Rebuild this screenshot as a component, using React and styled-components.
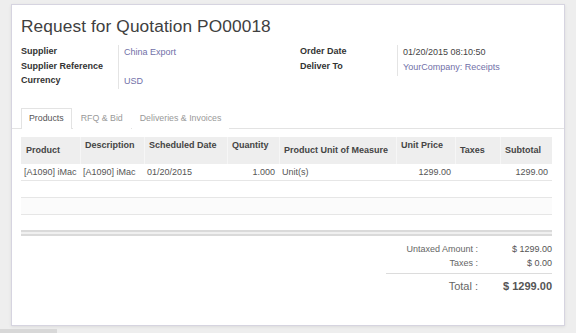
import React from 'react'
import styled, { createGlobalStyle } from 'styled-components'

const GlobalStyle = createGlobalStyle`
  html, body {
    margin: 0;
    padding: 0;
    background: #ececec;
    font-family: "Liberation Sans", Arial, sans-serif;
    color: #4c4c4c;
  }
`

const Page = styled.div`
  width: 576px;
  height: 333px;
  overflow: hidden;
  position: relative;
  box-sizing: border-box;
  padding: 4px 0 0 11px;
  background: #eeeeee;
`

const Sheet = styled.div`
  width: 554px;
  height: 322px;
  box-sizing: border-box;
  background: #ffffff;
  border: 1px solid #d6d4e0;
  box-shadow: 0 1px 3px rgba(0, 0, 0, 0.08);
  padding: 10px 13px 0 9px;
`

const Title = styled.h1`
  margin: 0;
  font-size: 17.3px;
  font-weight: normal;
  color: #404040;
  line-height: 22px;
  letter-spacing: 0.1px;
`

const FieldGroup = styled.div`
  display: flex;
  margin-top: 8px;
`

const FieldColumn = styled.div`
  display: grid;
  grid-template-columns: 97px 1fr;
  grid-template-rows: ${p => p.rows};
  width: ${p => p.width}px;
`

const Label = styled.div`
  font-size: 9px;
  font-weight: bold;
  color: #333;
  line-height: 13px;
`

const Value = styled.div`
  font-size: 9px;
  line-height: 15px;
  padding-left: 5px;
  border-left: 1px solid #e4e4e4;
  color: ${p => (p.link ? '#7170a8' : '#444')};
`

const Tabs = styled.div`
  display: flex;
  margin: 19px -13px 0 -9px;
  padding-left: 9px;
  border-bottom: 1px solid #e3e3e3;
  height: 20px;
`

const Tab = styled.div`
  font-size: 8.8px;
  line-height: 19px;
  padding: 0 7px;
  margin-right: 1px;
  color: ${p => (p.active ? '#555' : '#999')};
  background: #fff;
  border: 1px solid ${p => (p.active ? '#e3e3e3' : 'transparent')};
  border-bottom: none;
  box-sizing: border-box;
  margin-bottom: -1px;
  height: 21px;
`

const Table = styled.div`
  margin-top: 8px;
  width: 531px;
`

const cols = '59px 64px 83px 52px 117px 59px 45px 52px'

const HeaderRow = styled.div`
  display: grid;
  grid-template-columns: ${cols};
  height: 27px;
  background: #eeeeee;
`

const HeadCell = styled.div`
  font-size: 9px;
  font-weight: bold;
  color: #444;
  padding: ${p => (p.top ? '3px' : '8px')} 4px 0 4px;
  line-height: 11px;
  border-left: 1px solid ${p => (p.first ? 'transparent' : '#f6f6f6')};
  white-space: nowrap;
`

const Row = styled.div`
  display: grid;
  grid-template-columns: ${cols};
  height: 16px;
  border-bottom: 1px solid #e6e6e6;
  background: ${p => (p.alt ? '#fbfbfb' : '#fff')};
`

const Cell = styled.div`
  font-size: 9px;
  color: #555;
  line-height: 16px;
  padding: 0 4px 0 3px;
  text-align: ${p => (p.right ? 'right' : 'left')};
  white-space: nowrap;
`

const FootRow = styled.div`
  height: 2px;
  margin-top: 15px;
  border-top: 2px solid #dadada;
  border-bottom: 2px solid #dadada;
  background: #f0f0f0;
`

const Totals = styled.div`
  display: grid;
  grid-template-columns: 92px 74px;
  justify-content: end;
  margin-top: 6px;
  width: 531px;
`

const TotalLabel = styled.div`
  font-size: ${p => (p.big ? 11 : 9)}px;
  color: #666;
  text-align: right;
  line-height: ${p => (p.big ? 17 : 14)}px;
`

const TotalValue = styled.div`
  font-size: ${p => (p.big ? 11 : 9)}px;
  font-weight: ${p => (p.big ? 'bold' : 'normal')};
  color: #555;
  text-align: right;
  line-height: ${p => (p.big ? 17 : 14)}px;
`

const TotalRule = styled.div`
  grid-column: 1 / 3;
  border-top: 1px solid #dcdcdc;
  margin: 3px 0 4px 0;
`

const ScrollStub = styled.div`
  position: absolute;
  left: 0;
  bottom: 0;
  width: 57px;
  height: 4px;
  background: #d8d8d8;
`

export default function App() {
  return (
    <>
      <GlobalStyle />
      <Page>
        <Sheet>
          <Title>Request for Quotation PO00018</Title>
          <FieldGroup>
            <FieldColumn width={279} rows="15px 14px 15px">
              <Label>Supplier</Label>
              <Value link>China Export</Value>
              <Label>Supplier Reference</Label>
              <Value />
              <Label>Currency</Label>
              <Value link>USD</Value>
            </FieldColumn>
            <FieldColumn width={250} rows="15px 16px">
              <Label>Order Date</Label>
              <Value>01/20/2015 08:10:50</Value>
              <Label>Deliver To</Label>
              <Value link>YourCompany: Receipts</Value>
            </FieldColumn>
          </FieldGroup>

          <Tabs>
            <Tab active>Products</Tab>
            <Tab>RFQ &amp; Bid</Tab>
            <Tab>Deliveries &amp; Invoices</Tab>
          </Tabs>

          <Table>
            <HeaderRow>
              <HeadCell first>Product</HeadCell>
              <HeadCell top>Description</HeadCell>
              <HeadCell top>Scheduled Date</HeadCell>
              <HeadCell top>Quantity</HeadCell>
              <HeadCell>Product Unit of Measure</HeadCell>
              <HeadCell top>Unit Price</HeadCell>
              <HeadCell>Taxes</HeadCell>
              <HeadCell>Subtotal</HeadCell>
            </HeaderRow>
            <Row>
              <Cell>[A1090] iMac</Cell>
              <Cell>[A1090] iMac</Cell>
              <Cell>01/20/2015</Cell>
              <Cell right>1.000</Cell>
              <Cell>Unit(s)</Cell>
              <Cell right>1299.00</Cell>
              <Cell />
              <Cell right>1299.00</Cell>
            </Row>
            <Row />
            <Row alt />
            <FootRow />
          </Table>

          <Totals>
            <TotalLabel>Untaxed Amount :</TotalLabel>
            <TotalValue>$ 1299.00</TotalValue>
            <TotalLabel>Taxes :</TotalLabel>
            <TotalValue>$ 0.00</TotalValue>
            <TotalRule />
            <TotalLabel big>Total :</TotalLabel>
            <TotalValue big>$ 1299.00</TotalValue>
          </Totals>
        </Sheet>
        <ScrollStub />
      </Page>
    </>
  )
}
